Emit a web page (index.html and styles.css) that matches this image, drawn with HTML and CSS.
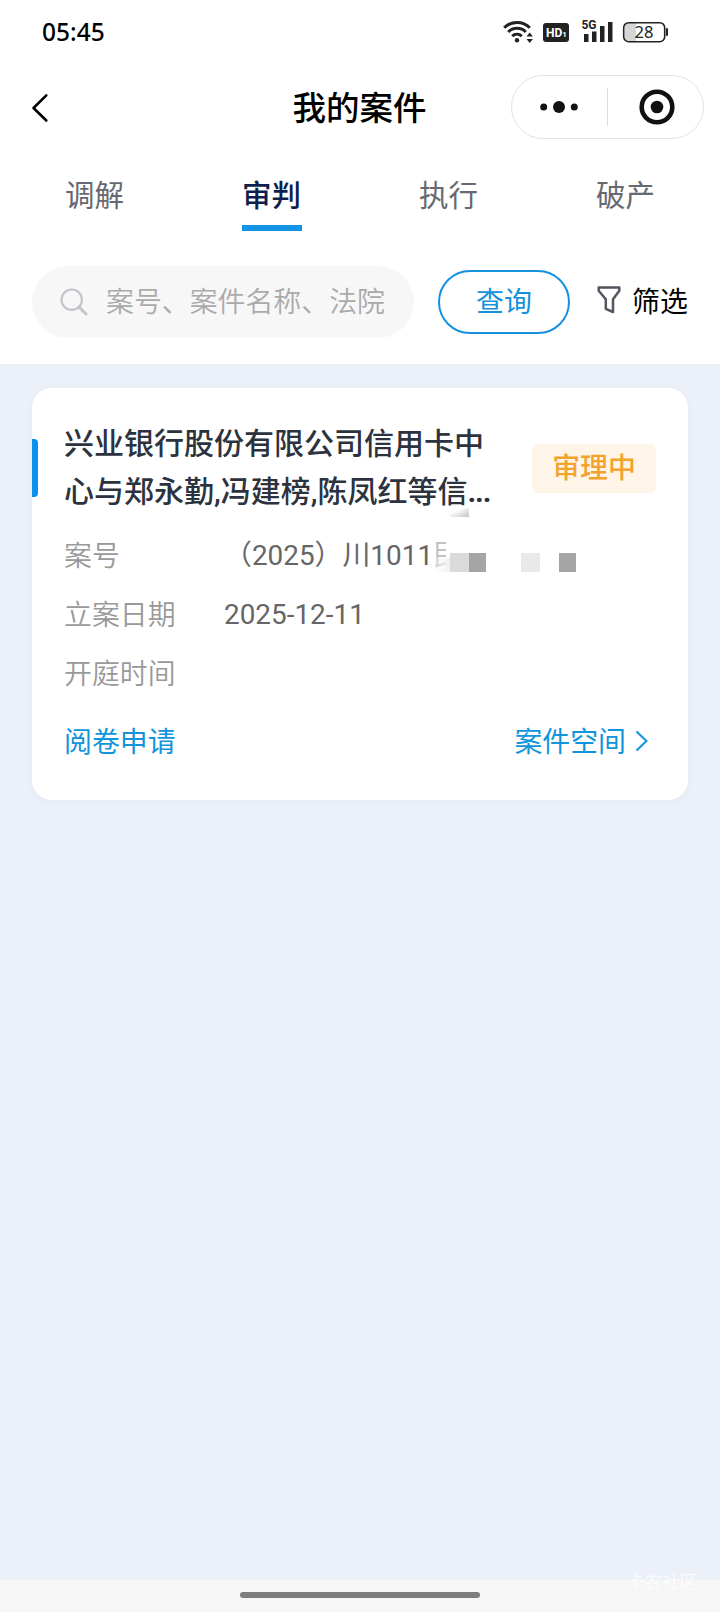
FILE: index.html
```html
<!DOCTYPE html>
<html lang="zh-CN">
<head>
<meta charset="utf-8">
<title>我的案件</title>
<link rel="stylesheet" href="styles.css">
</head>
<body>
<div class="page">
  <header class="top">
    <div class="status">
      <span class="clock">05:45</span>
      <svg class="status-icons" width="168" height="28" viewBox="0 0 168 28">
        <g fill="none" stroke="#222" stroke-width="3">
          <path d="M1.2 9.8C8 2.600 20 2.600 26.800 9.800"/>
          <path d="M5.200 14C10 9 18 9 22.800 14"/>
          <path d="M9.200 18.200C12 15.500 16 15.500 18.800 18.200"/>
        </g>
        <circle cx="14" cy="22.200" r="2.200" fill="#222"/>
        <path d="M23.500 18.500l3.200-4 3.200 4zM23.500 21l3.200 4 3.200-4z" fill="#222"/>
        <rect x="40" y="5" width="26" height="19" rx="3" fill="#222"/>
        <text x="43" y="19.300" class="hd">HD<tspan class="hd-one">1</tspan></text>
        <text x="78.500" y="11.300" class="net" textLength="15" lengthAdjust="spacingAndGlyphs">5G</text>
        <path d="M81 16h4.500v8H81zM89 13.500h4.500V24H89zM97 8h4.500v16H97zM105 4h4.500v20H105z" fill="#222"/>
        <path d="M125 5h8v18h-8a3 3 0 0 1-3-3V8a3 3 0 0 1 3-3z" fill="#d6d6d6"/>
        <rect x="120.700" y="4.700" width="41" height="19" rx="5" fill="none" stroke="#222" stroke-width="1.600"/>
        <path d="M164 11v6" stroke="#222" stroke-width="2" stroke-linecap="round"/>
        <text x="131.500" y="19.500" class="battery" textLength="19" lengthAdjust="spacingAndGlyphs">28</text>
      </svg>
    </div>
    <div class="nav">
      <svg class="back" width="18" height="30" viewBox="0 0 18 30"><path d="M15.300 2.300L2.500 15l12.800 12.500" fill="none" stroke="#000" stroke-width="2.600" stroke-linecap="round" stroke-linejoin="round"/></svg>
      <h1 class="nav-title">我的案件</h1>
      <div class="capsule">
        <svg width="38" height="14" viewBox="0 0 38 14" fill="#111"><circle cx="3.700" cy="7" r="3.500"/><circle cx="19" cy="7" r="6"/><circle cx="34.300" cy="7" r="3.500"/></svg>
        <i class="capsule-line"></i>
        <svg width="36" height="36" viewBox="0 0 36 36"><circle cx="18" cy="18" r="15.300" fill="none" stroke="#111" stroke-width="4.600"/><circle cx="18" cy="18" r="6.300" fill="#111"/></svg>
      </div>
    </div>
    <nav class="tabs">
      <span class="tab">调解</span>
      <span class="tab active">审判</span>
      <span class="tab">执行</span>
      <span class="tab">破产</span>
    </nav>
    <div class="search-row">
      <div class="search">
        <svg width="28" height="28" viewBox="0 0 28 28" fill="none" stroke="#c3c5cc"><circle cx="11.700" cy="11.700" r="10.200" stroke-width="2.200"/><path d="M19 19l7 7" stroke-width="3" stroke-linecap="round"/></svg>
        <span class="placeholder">案号、案件名称、法院</span>
      </div>
      <span class="query">查询</span>
      <div class="filter">
        <svg width="24" height="28" viewBox="0 0 24 28"><path d="M1.700 1.500h20.600v3.300l-6.300 8.500V26l-7.200-3.200v-9.500L1.700 4.800z" fill="none" stroke="#55545f" stroke-width="2.500" stroke-linejoin="round"/></svg>
        <span class="filter-label">筛选</span>
      </div>
    </div>
  </header>
  <main class="content">
    <article class="card">
      <div class="card-head">
        <h2 class="case-name">兴业银行股份有限公司信用卡中<br>心与郑永勤,冯建榜,陈凤红等信<span class="dots">...</span></h2>
        <span class="badge">审理中</span>
      </div>
      <dl class="fields">
        <dt>案号</dt>
        <dd>（2025）川1011<span class="masked">民</span>
          <svg class="mosaic" width="152" height="64" viewBox="0 0 152 64">
            <defs>
              <linearGradient id="fade"><stop offset="0" stop-color="#fff" stop-opacity="0"/><stop offset="1" stop-color="#eee"/></linearGradient>
              <linearGradient id="smudge" x1="0" y1="0" x2="1" y2="1"><stop offset=".3" stop-color="#fff"/><stop offset="1" stop-color="#c4c4c4"/></linearGradient>
            </defs>
            <rect x="20" y="0" width="19" height="9" fill="url(#smudge)"/>
            <rect x="16" y="30" width="25" height="34" fill="#fff"/>
            <rect x="0" y="50" width="20" height="14" fill="url(#fade)"/>
            <rect x="20" y="45" width="19" height="19" fill="#dadada"/>
            <rect x="39" y="45" width="17" height="19" fill="#a5a5a5"/>
            <rect x="91" y="45" width="19" height="19" fill="#e9e9e9"/>
            <rect x="129" y="45" width="17" height="19" fill="#a5a5a5"/>
          </svg>
        </dd>
        <dt>立案日期</dt><dd>2025-12-11</dd>
        <dt>开庭时间</dt><dd></dd>
      </dl>
      <div class="actions">
        <span>阅卷申请</span>
        <span class="space">案件空间<svg width="14" height="22" viewBox="0 0 14 22"><path d="M1.500 1.500L11.500 11l-10 9.500" fill="none" stroke="#1094db" stroke-width="2"/></svg></span>
      </div>
    </article>
  </main>
  <footer class="gesture"><i class="gesture-bar"></i><span class="watermark">卡农社区</span></footer>
</div>
</body>
</html>
```
FILE: styles.css
```css
* { box-sizing: border-box; }
body {
  margin: 0;
  font-family: Roboto, "Noto Sans CJK SC", sans-serif;
  font-size: 27.900px;
  color: #000;
}
h1, h2, dl, dd { margin: 0; }
svg { display: block; flex: none; }
.page {
  display: flex;
  flex-direction: column;
  width: 720px;
  height: 1612px;
  background: #ecf0f8;
  overflow: hidden;
}
.top { height: 364px; background: #fff; }
.status {
  display: flex;
  justify-content: space-between;
  align-items: center;
  height: 65px;
  padding: 0 49px 0 42px;
}
.clock { margin-top: -1px; font: 500 24.500px/30px "Noto Sans", sans-serif; }
.status-icons { margin-top: -1px; }
.hd { font: bold 12px Roboto, sans-serif; fill: #fff; }
.hd-one { font-size: 8px; }
.net { font: bold 13px Roboto, sans-serif; fill: #222; }
.battery { font: 16px "Noto Sans", sans-serif; fill: #222; }
.nav {
  display: grid;
  grid-template-columns: 193px 1fr 193px;
  align-items: center;
  height: 85px;
  padding: 0 16px;
}
.back { margin-left: 15px; }
.nav-title {
  padding-top: 2px;
  margin-left: -1px;
  text-align: center;
  font-size: 33.500px;
  font-weight: 500;
  line-height: 50px;
}
.capsule {
  display: flex;
  align-items: center;
  height: 64px;
  margin-top: -1px;
  padding-left: 28px;
  border: 1px solid #e2e2e2;
  border-radius: 32px;
}
.capsule-line { width: 1px; height: 38px; background: #ddd; margin: 0 31px 0 29px; }
.tabs {
  display: grid;
  grid-template-columns: repeat(4, 177px);
  justify-content: center;
  justify-items: center;
  height: 81px;
  padding-top: 14px;
}
.tab {
  width: 60px;
  height: 67px;
  text-align: center;
  font-size: 29.500px;
  line-height: 64px;
  white-space: nowrap;
  color: #666970;
}
.tab.active { border-bottom: 6px solid #1492e6; color: #0d1f4c; font-weight: 500; }
.search-row {
  display: flex;
  align-items: center;
  padding: 35px 32px 0;
}
.search {
  display: flex;
  align-items: center;
  gap: 18px;
  width: 382px;
  height: 72px;
  padding-left: 28px;
  border-radius: 36px;
  background: #f7f7f7;
}
.placeholder { padding-bottom: 4px; color: #aaa; white-space: nowrap; font-weight: 350; }
.query {
  width: 132px;
  height: 64px;
  margin-left: 24px;
  border: 2px solid #1492e0;
  border-radius: 32px;
  color: #1492dc;
  line-height: 62px;
  text-align: center;
}
.filter { display: flex; align-items: center; gap: 11px; margin-left: 27px; }
.filter svg { margin-top: -4px; }
.filter-label { padding-bottom: 4px; }
.content { flex: 1; padding: 24px 32px; }
.card {
  position: relative;
  height: 412px;
  padding: 32px 32px 0;
  border-radius: 20px;
  background: #fff;
  box-shadow: 0 2px 8px rgba(60, 80, 120, .04);
}
.card::before {
  content: "";
  position: absolute;
  left: 0;
  top: 51px;
  width: 6px;
  height: 58px;
  border-radius: 0 4px 4px 0;
  background: #0e91ed;
}
.card-head { display: flex; align-items: center; justify-content: space-between; }
.case-name {
  font-size: 30px;
  font-weight: 500;
  line-height: 48px;
  white-space: nowrap;
  color: #2c333e;
}
.dots { font-weight: 700; letter-spacing: -1px; }
.badge {
  width: 124px;
  height: 49px;
  border-radius: 6px;
  background: #fff4e8;
  color: #f2a32e;
  font-weight: 500;
  line-height: 50px;
  text-align: center;
}
.fields {
  display: grid;
  grid-template-columns: 160px 1fr;
  grid-auto-rows: 59.200px;
  margin-top: 10px;
  line-height: 59px;
}
.fields dt { padding-top: .5px; color: #999; font-weight: 350; }
.fields dd { position: relative; color: #666; white-space: nowrap; }
.masked { opacity: .4; }
.mosaic { position: absolute; left: 206px; top: -18px; }
.actions {
  display: flex;
  justify-content: space-between;
  margin-top: 5px;
  line-height: 67px;
  color: #1094db;
}
.space { display: flex; align-items: center; gap: 9px; padding-right: 7px; }
.space svg { margin-top: -3px; }
.gesture {
  position: relative;
  height: 32px;
  padding-top: 12px;
  background: #f6f6f6;
}
.gesture-bar {
  display: block;
  width: 240px;
  height: 6px;
  margin: 0 auto;
  border-radius: 3px;
  background: #7d7d7d;
}
.watermark {
  position: absolute;
  right: 23px;
  top: -11px;
  font-size: 17.500px;
  line-height: 26px;
  color: rgba(255, 255, 255, .75);
}
```
